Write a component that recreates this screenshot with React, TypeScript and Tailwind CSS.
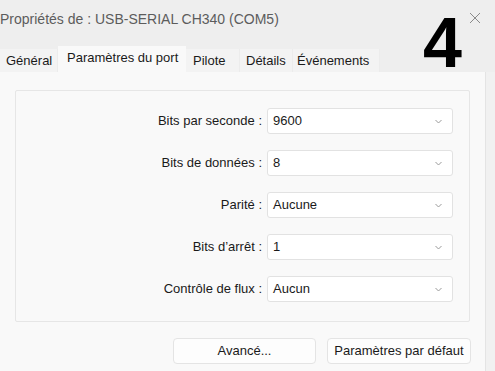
import React from "react";

const rows = [
  { label: "Bits par seconde :", value: "9600" },
  { label: "Bits de données :", value: "8" },
  { label: "Parité :", value: "Aucune" },
  { label: "Bits d’arrêt :", value: "1" },
  { label: "Contrôle de flux :", value: "Aucun" },
];

const tabs = [
  { name: "Général", w: "w-[58px]", pl: "pl-[6px]" },
  { name: "Paramètres du port", w: "w-[128px]", pl: "pl-[9px]", active: true },
  { name: "Pilote", w: "w-[54px]", pl: "pl-[7px]" },
  { name: "Détails", w: "w-[53px]", pl: "pl-[6px]" },
  { name: "Événements", w: "w-[87px]", pl: "pl-[4px]" },
];

const Chevron = () => (
  <svg width="7" height="5" viewBox="0 0 7 5" className="mr-[10px]">
    <polyline points="0.5,1 3.5,4 6.5,1" fill="none" stroke="#9a9a9a" strokeWidth="1" />
  </svg>
);

const App = () => {
  return (
    <div
      className="relative w-[495px] h-[371px] overflow-hidden bg-[#eeeeee] flex flex-col text-[#1a1a1a]"
      style={{ fontFamily: '"Liberation Sans", Arial, sans-serif' }}
    >
      {/* title bar */}
      <div className="h-[46px] flex items-start justify-between shrink-0">
        <span className="mt-[9px] ml-0 text-[14px] text-[#5c5c5c]">
          Propriétés de : USB-SERIAL CH340 (COM5)
        </span>
        <svg width="12" height="12" viewBox="0 0 12 12" className="mt-[12px] mr-[14px]">
          <path d="M1 1 L11 11 M11 1 L1 11" stroke="#8a8a8a" strokeWidth="1" />
        </svg>
      </div>

      {/* tabs */}
      <div className="h-[26px] flex items-end shrink-0 text-[13px]">
        {tabs.map((t) =>
          t.active ? (
            <div key={t.name} className={`${t.w} ${t.pl} h-[26px] bg-[#f9f9f9] flex items-center pb-[2px]`}>
              {t.name}
            </div>
          ) : (
            <div
              key={t.name}
              className={`${t.w} ${t.pl} h-[23px] bg-[#f3f3f3] border-r border-[#ececec] flex items-center pt-[1px]`}
            >
              {t.name}
            </div>
          )
        )}
      </div>

      {/* panel */}
      <div className="flex flex-1">
        <div className="w-[485px] bg-[#f9f9f9] pt-[18px] pl-[15px] text-[13px]">
          <div className="w-[455px] h-[232px] border border-[#e6e6e6] rounded-[2px] pt-[17px] pr-[16px] flex flex-col gap-[16px]">
            {rows.map((r) => (
              <div key={r.label} className="h-[26px] flex items-center justify-end">
                <span className="mr-[5px]">{r.label}</span>
                <div className="w-[186px] h-[26px] bg-white border border-[#e2e2e2] rounded-[3px] flex items-center justify-between pl-[5px]">
                  <span>{r.value}</span>
                  <Chevron />
                </div>
              </div>
            ))}
          </div>
          <div className="flex justify-end gap-[11px] mt-[16px] pr-[14px]">
            <button className="w-[143px] h-[26px] bg-[#fdfdfd] border border-[#e4e4e4] rounded-[4px] text-[13px]">
              Avancé...
            </button>
            <button className="w-[144px] h-[26px] bg-[#fdfdfd] border border-[#e4e4e4] rounded-[4px] text-[13px]">
              Paramètres par défaut
            </button>
          </div>
        </div>
        <div className="w-[10px] border-l border-[#e4e4e4] bg-[#f1f1f1]" />
      </div>

      {/* annotation */}
      <span
        className="absolute left-[423px] top-[8px] text-[70px] font-bold leading-none text-black"
        style={{ fontFamily: '"Liberation Sans", Arial, sans-serif' }}
      >
        4
      </span>
    </div>
  );
};

export default App;
